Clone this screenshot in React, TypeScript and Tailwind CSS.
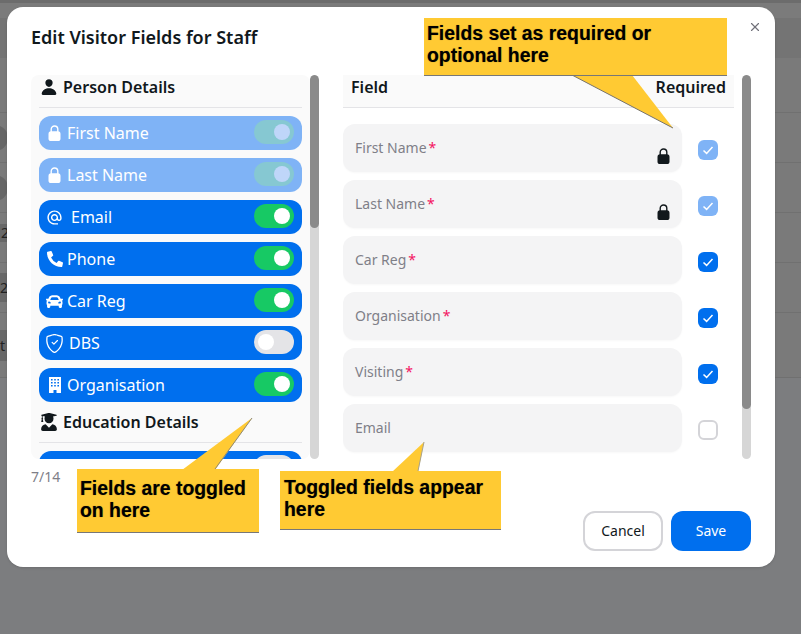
import type { ReactNode } from "react";
import { BsShieldCheck } from "react-icons/bs";
import { FaCar, FaPhoneAlt, FaUserGraduate } from "react-icons/fa";
import { IoPerson } from "react-icons/io5";
import { MdAlternateEmail } from "react-icons/md";
import { X } from "lucide-react";

type Toggle = {
  label: string;
  icon: ReactNode;
  on: boolean;
  locked?: boolean;
  labelClass?: string;
};

function LockIcon({ className }: { className: string }) {
  return (
    <svg viewBox="0 0 13 16" className={className} fill="currentColor">
      <path d="M3.2 7V4.3a3.3 3.3 0 0 1 6.6 0V7" fill="none" stroke="currentColor" strokeWidth="1.4" />
      <rect x="0.5" y="6.3" width="12" height="9.7" rx="2.6" />
    </svg>
  );
}

function BuildingIcon() {
  return (
    <svg viewBox="0 0 12 16" className="h-4 w-3 shrink-0" fill="currentColor">
      <path
        fillRule="evenodd"
        d="M0 0h12v16H7.5v-3h-3v3H0ZM2 2v1.6h1.6V2Zm3.2 0v1.6h1.6V2Zm3.2 0v1.6H10V2ZM2 5v1.6h1.6V5Zm3.2 0v1.6h1.6V5Zm3.2 0v1.6H10V5ZM2 8v1.6h1.6V8Zm3.2 0v1.6h1.6V8Zm3.2 0v1.6H10V8Z"
      />
    </svg>
  );
}

const personFields: Toggle[] = [
  { label: "First Name", icon: <LockIcon className="h-4 w-[13px] shrink-0" />, on: true, locked: true },
  { label: "Last Name", icon: <LockIcon className="h-4 w-[13px] shrink-0" />, on: true, locked: true },
  { label: "Email", icon: <MdAlternateEmail className="h-[17px] w-[17px] shrink-0" />, on: true, labelClass: "ml-[4px]" },
  { label: "Phone", icon: <FaPhoneAlt className="h-[16px] w-[16px] shrink-0" />, on: true },
  { label: "Car Reg", icon: <FaCar className="h-[17px] w-[17px] shrink-0" />, on: true },
  { label: "DBS", icon: <BsShieldCheck className="h-[19px] w-[19px] shrink-0" />, on: false, labelClass: "ml-[2px]" },
  { label: "Organisation", icon: <BuildingIcon />, on: true },
];

const requiredFields = [
  { label: "First Name", state: "locked" },
  { label: "Last Name", state: "locked" },
  { label: "Car Reg", state: "checked" },
  { label: "Organisation", state: "checked" },
  { label: "Visiting", state: "checked" },
  { label: "Email", state: "empty" },
];

function Switch({ on, locked }: { on: boolean; locked?: boolean }) {
  const track = locked ? "bg-[#86c8d2]" : on ? "bg-[#17c964]" : "bg-[#e4e4e7]";
  return (
    <span className={`mb-[2px] flex h-6 w-10 items-center rounded-full px-1 ${on ? "justify-end" : "justify-start"} ${track}`}>
      <span className={`h-4 w-4 rounded-full ${locked ? "bg-[#bfd6f9]" : "bg-white"}`} />
    </span>
  );
}

function FieldToggle({ field }: { field: Toggle }) {
  return (
    <div
      className={`flex h-[34px] shrink-0 items-center justify-between rounded-xl pl-2 pr-2 text-white ${
        field.locked ? "bg-[#7fb3f6]" : "bg-[#006fee]"
      }`}
    >
      <span className="flex items-center gap-[5px]">
        <span className="flex w-[15px] justify-center">{field.icon}</span>
        <span className={`text-base leading-6 ${field.labelClass ?? ""}`}>{field.label}</span>
      </span>
      <Switch on={field.on} locked={field.locked} />
    </div>
  );
}

function SectionHeader({ icon, title }: { icon: ReactNode; title: string }) {
  return (
    <div className="flex h-[33px] shrink-0 items-center gap-[6px] border-b border-[#e4e4e7] pb-[8px] pl-[2px] text-[#11181c]">
      <span className="flex w-4 justify-center">{icon}</span>
      <span className="text-base font-semibold leading-6">{title}</span>
    </div>
  );
}

function Check() {
  return (
    <svg viewBox="0 0 20 20" className="h-5 w-5" fill="none" stroke="white" strokeWidth="1.5">
      <path d="M5.5 10.5 8.6 13.4 14.5 7" />
    </svg>
  );
}

function RequiredBox({ state }: { state: string }) {
  if (state === "empty") {
    return <span className="mt-1 h-5 w-5 rounded-md border-2 border-[#d4d4d8]" />;
  }
  return (
    <span className={`mt-1 h-5 w-5 rounded-md ${state === "locked" ? "bg-[#7fb3f6]" : "bg-[#006fee]"}`}>
      <Check />
    </span>
  );
}

function Scrollbar({ thumb }: { thumb: string }) {
  return (
    <div className="h-full w-[9px] shrink-0 overflow-hidden rounded-md bg-[#d6d6d6]">
      <div className={`rounded-md bg-[#8a8a8a] ${thumb}`} />
    </div>
  );
}

function PageBehind() {
  return (
    <div className="text-sm text-[#222]">
      <div className="h-[3px] bg-[#6c6c6c]" />
      <div className="h-[15px] bg-[#7b7b7b]" />
      <div className="h-[40px] bg-[#747474]" />
      <div className="h-[55px] border-b border-[#707070] bg-[#7a7a7a]" />
      <div className="flex h-[50px] items-center border-b border-[#707070] bg-[#7a7a7a]">
        <span className="-ml-[18px] h-[26px] w-[26px] rounded-full bg-[#666]" />
      </div>
      <div className="flex h-[50px] items-center border-b border-[#707070] bg-[#7a7a7a]">
        <span className="-ml-[18px] h-[26px] w-[26px] rounded-full bg-[#666]" />
      </div>
      <div className="h-[50px] border-b border-[#707070] bg-[#7a7a7a] pt-[11px]">
        <span className="block h-[18px] w-[30px] whitespace-nowrap bg-[#686868] pl-[1px] leading-[18px]">2</span>
      </div>
      <div className="flex h-[50px] items-center border-b border-[#707070] bg-[#7a7a7a]">
        <span className="block h-[29px] w-[30px] whitespace-nowrap bg-[#686868] leading-[29px]">2</span>
      </div>
      <div className="flex h-[65px] items-center border-b border-[#707070] bg-[#7a7a7a]">
        <span className="block h-[31px] w-[30px] whitespace-nowrap bg-[#686868] leading-[31px]">t</span>
      </div>
    </div>
  );
}

function Callouts() {
  return (
    <>
      <svg className="pointer-events-none absolute left-0 top-0 h-[634px] w-[801px]" viewBox="0 0 801 634">
        <polygon points="572,75 632,75 673,128" fill="#ffca33" />
        <line x1="572" y1="75" x2="673" y2="128" stroke="#77736a" strokeWidth="1" />
        <polygon points="182,470 215,470 252,418" fill="#ffca33" />
        <line x1="215" y1="469" x2="252" y2="418" stroke="#8f8a78" strokeWidth="1" />
        <polygon points="392,472 418,472 424,442" fill="#ffca33" />
        <line x1="418" y1="471" x2="424" y2="442" stroke="#a8a28c" strokeWidth="1" />
      </svg>
      <div className="absolute left-[424px] top-[18px] h-[58px] w-[303px] border-b border-[#777] bg-[#ffca33] px-[3px] pt-[5px] font-['Liberation_Sans',sans-serif] text-[19.4px] font-bold leading-[21.5px] text-black [text-shadow:0_0_1px_rgba(0,0,0,0.45)]">
        Fields set as required or
        <br />
        optional here
      </div>
      <div className="absolute left-[77px] top-[469px] h-[64px] w-[182px] border-b border-[#777] bg-[#ffca33] px-[3px] pt-[9px] font-['Liberation_Sans',sans-serif] text-[19.4px] font-bold leading-[21.5px] text-black [text-shadow:0_0_1px_rgba(0,0,0,0.45)]">
        Fields are toggled
        <br />
        on here
      </div>
      <div className="absolute left-[280px] top-[471px] h-[59px] w-[221px] border-b border-[#777] bg-[#ffca33] px-[4px] pt-[6px] font-['Liberation_Sans',sans-serif] text-[19.4px] font-bold leading-[21.5px] text-black [text-shadow:0_0_1px_rgba(0,0,0,0.45)]">
        Toggled fields appear
        <br />
        here
      </div>
    </>
  );
}

export default function App() {
  return (
    <div className="relative h-[634px] w-[801px] overflow-hidden bg-[#7c7d7f] font-['Noto_Sans',sans-serif]">
      <PageBehind />

      <div className="absolute left-[7px] top-[7px] flex h-[560px] w-[768px] flex-col rounded-2xl bg-white shadow-sm">
        <button type="button" className="absolute right-[13px] top-[13px] text-[#71717a]">
          <X className="h-[14px] w-[14px]" />
        </button>

        <h2 className="h-[68px] shrink-0 px-6 pt-[17px] text-lg font-semibold leading-[27px] text-[#11181c]">
          Edit Visitor Fields for Staff
        </h2>

        <div className="flex h-[384px] shrink-0 gap-6 px-6">
          <div className="flex w-[288px] shrink-0">
            <div className="flex w-[279px] flex-col gap-2 overflow-hidden rounded-lg bg-[#fafafa] px-2">
              <SectionHeader icon={<IoPerson className="h-[18px] w-[18px] shrink-0" />} title="Person Details" />
              {personFields.map((field) => (
                <FieldToggle key={field.label} field={field} />
              ))}
              <SectionHeader icon={<FaUserGraduate className="h-[18px] w-[18px] shrink-0" />} title="Education Details" />
              <FieldToggle field={{ label: "", icon: null, on: false }} />
            </div>
            <Scrollbar thumb="h-[153px]" />
          </div>

          <div className="flex w-[408px] shrink-0 gap-2">
            <div className="w-[391px] overflow-hidden">
              <div className="flex h-[33px] items-center justify-between border-b border-[#e4e4e7] bg-[#fafafa] px-2 pb-[8px] text-base font-semibold leading-6 text-[#11181c]">
                <span>Field</span>
                <span>Required</span>
              </div>
              <div className="mt-4 flex flex-col gap-2">
                {requiredFields.map((field) => (
                  <div key={field.label} className="flex items-center gap-4">
                    <div className="flex h-12 w-[339px] justify-between rounded-xl bg-[#f4f4f5] px-3 shadow-[0_1px_2px_rgba(0,0,0,0.03)]">
                      <span className="mt-[13px] text-sm leading-[22px] text-[#7f7f88]">
                        {field.label}
                        {field.state !== "empty" && <span className="ml-[2px] text-[#f31260]">*</span>}
                      </span>
                      {field.state === "locked" && (
                        <LockIcon className="mt-6 h-4 w-[13px] text-[#11181c]" />
                      )}
                    </div>
                    <RequiredBox state={field.state} />
                  </div>
                ))}
              </div>
            </div>
            <Scrollbar thumb="h-[334px]" />
          </div>
        </div>

        <div className="flex grow flex-col justify-between px-6 pb-4 pt-[8px]">
          <p className="text-sm leading-5 text-[#7f7f88]">7/14</p>
          <div className="flex justify-end gap-2">
            <button
              type="button"
              className="h-10 w-20 rounded-xl border-2 border-[#d4d4d8] bg-white text-sm text-[#11181c]"
            >
              Cancel
            </button>
            <button type="button" className="h-10 w-20 rounded-xl bg-[#006fee] text-sm text-white">
              Save
            </button>
          </div>
        </div>
      </div>

      <Callouts />
    </div>
  );
}
